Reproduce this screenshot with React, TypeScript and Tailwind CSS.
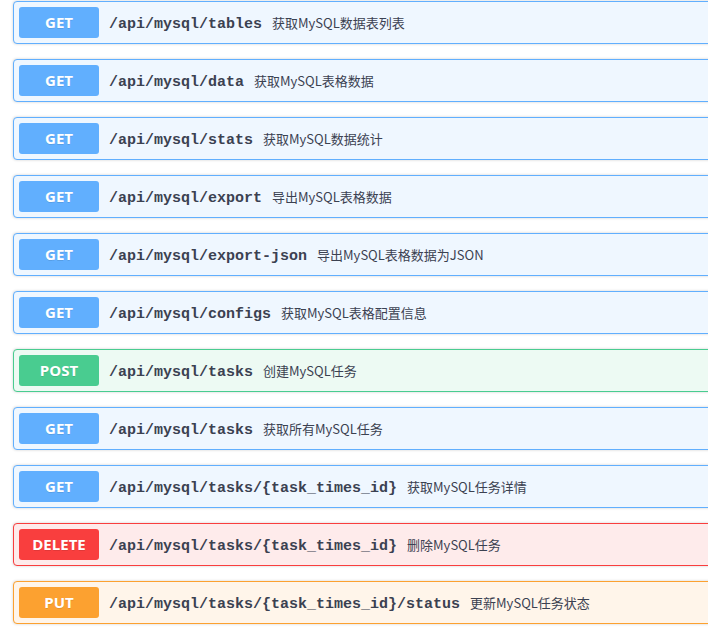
const endpoints = [
  { method: 'GET', path: '/api/mysql/tables', desc: '获取MySQL数据表列表' },
  { method: 'GET', path: '/api/mysql/data', desc: '获取MySQL表格数据' },
  { method: 'GET', path: '/api/mysql/stats', desc: '获取MySQL数据统计' },
  { method: 'GET', path: '/api/mysql/export', desc: '导出MySQL表格数据' },
  { method: 'GET', path: '/api/mysql/export-json', desc: '导出MySQL表格数据为JSON' },
  { method: 'GET', path: '/api/mysql/configs', desc: '获取MySQL表格配置信息' },
  { method: 'POST', path: '/api/mysql/tasks', desc: '创建MySQL任务' },
  { method: 'GET', path: '/api/mysql/tasks', desc: '获取所有MySQL任务' },
  { method: 'GET', path: '/api/mysql/tasks/{task_times_id}', desc: '获取MySQL任务详情' },
  { method: 'DELETE', path: '/api/mysql/tasks/{task_times_id}', desc: '删除MySQL任务' },
  { method: 'PUT', path: '/api/mysql/tasks/{task_times_id}/status', desc: '更新MySQL任务状态' },
];

const styles: Record<string, { block: string; badge: string }> = {
  GET: { block: 'border-[#61affe] bg-[#eff7ff]', badge: 'bg-[#61affe]' },
  POST: { block: 'border-[#49cc90] bg-[#edfaf3]', badge: 'bg-[#49cc90]' },
  DELETE: { block: 'border-[#f93e3e] bg-[#feebeb]', badge: 'bg-[#f93e3e]' },
  PUT: { block: 'border-[#fca130] bg-[#fff5ea]', badge: 'bg-[#fca130]' },
};

export default function App() {
  return (
    <div className="w-[708px] h-[631px] overflow-hidden bg-white pt-px">
      <div className="ml-[13px] w-[720px] flex flex-col gap-[15px]">
        {endpoints.map((e, i) => (
          <div
            key={i}
            className={`flex items-center border rounded-[4px] p-[5px] shadow-[0_0_3px_rgba(0,0,0,0.19)] ${styles[e.method].block}`}
          >
            <span
              className={`w-[80px] h-[31px] flex items-center justify-center rounded-[3px] text-white font-bold text-[15px] font-['Open_Sans','Noto_Sans_CJK_SC',sans-serif] [text-shadow:0_1px_0_rgba(0,0,0,0.1)] ${styles[e.method].badge}`}
            >
              {e.method}
            </span>
            <div className="flex items-baseline pt-[3px]">
              <span className="px-[10px] font-['Liberation_Mono',monospace] font-bold text-[15px] leading-[20px] text-[#3b4151]">
                {e.path}
              </span>
              <span className="text-[13px] leading-[20px] text-[#3b4151] font-['Noto_Sans_CJK_SC',sans-serif]">
                {e.desc}
              </span>
            </div>
          </div>
        ))}
      </div>
    </div>
  );
}
